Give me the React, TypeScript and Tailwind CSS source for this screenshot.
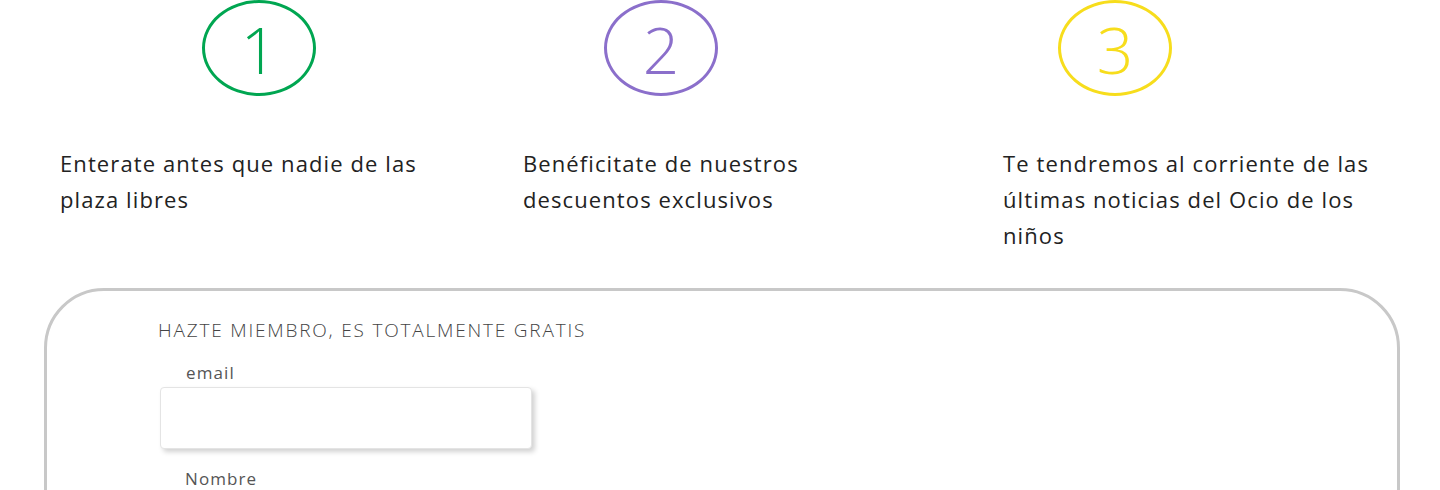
const steps = [
  {
    n: "1",
    ring: "border-[#00a651]",
    color: "text-[#00a651]",
    offset: "ml-[142px]",
    text: "Enterate antes que nadie de las plaza libres",
  },
  {
    n: "2",
    ring: "border-[#8b6fcb]",
    color: "text-[#8b6fcb]",
    offset: "ml-[81px]",
    text: "Benéficitate de nuestros descuentos exclusivos",
  },
  {
    n: "3",
    ring: "border-[#f7dd1c]",
    color: "text-[#f7dd1c]",
    offset: "ml-[55px]",
    text: "Te tendremos al corriente de las últimas noticias del Ocio de los niños",
  },
];

function Step(props: any) {
  const { step } = props;
  return (
    <div className="flex flex-col">
      <div
        className={`${step.offset} w-[114px] h-[96px] rounded-[50%] border-[3px] ${step.ring} flex items-center justify-center`}
      >
        <span className={`${step.color} text-[64px] font-light leading-none mt-[4px]`}>
          {step.n}
        </span>
      </div>
      <p className="mt-[49px] w-[390px] text-[22px] leading-[36px] tracking-[1.1px] text-[#222]">
        {step.text}
      </p>
    </div>
  );
}

export default function App() {
  return (
    <div className="w-[1440px] h-[490px] overflow-hidden bg-white font-['Open_Sans',sans-serif]">
      <div className="grid grid-cols-[463px_480px_1fr] pl-[60px]">
        {steps.map((s) => (
          <Step key={s.n} step={s} />
        ))}
      </div>

      <div className="mt-[35px] ml-[44px] w-[1356px] h-[260px] rounded-[60px] border-[3px] border-[#c8c8c8] pl-[111px] pt-[25px]">
        <h2 className="text-[19px] font-light tracking-[1.8px] text-[#444]">
          HAZTE MIEMBRO, ES TOTALMENTE GRATIS
        </h2>
        <label className="block mt-[15px] ml-[28px] text-[17px] tracking-[1.1px] text-[#555]">
          email
        </label>
        <input
          type="email"
          className="block mt-[2px] ml-[2px] w-[372px] h-[62px] rounded-[4px] bg-white border border-[#e4e4e4] shadow-[3px_3px_5px_rgba(0,0,0,0.18)] outline-none"
        />
        <label className="block mt-[17px] ml-[27px] text-[17px] tracking-[1.1px] text-[#555]">
          Nombre
        </label>
      </div>
    </div>
  );
}
